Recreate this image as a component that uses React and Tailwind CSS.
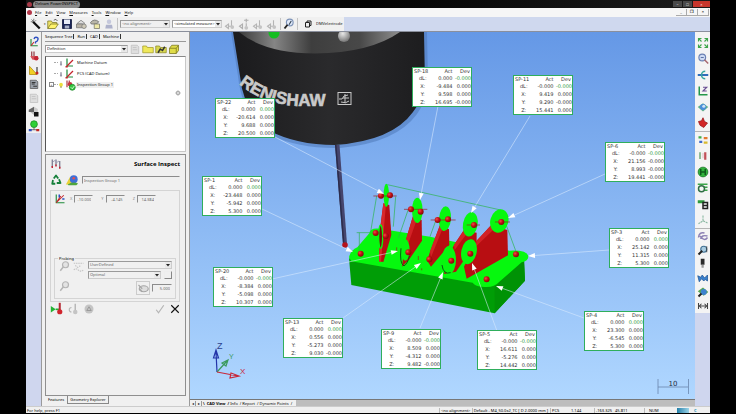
import clsx from "clsx";

const callouts = [
  { id: "SP-22", pos: "left-[25px] top-[66px]", dl: ["0.000", "0.000"], rows: [["X:", "-20.614", "0.000"], ["Y:", "9.688", "0.000"], ["Z:", "20.500", "0.000"]] },
  { id: "SP-18", pos: "left-[222px] top-[35px]", dl: ["0.000", "-0.000"], rows: [["X:", "-9.484", "0.000"], ["Y:", "9.598", "0.000"], ["Z:", "16.695", "-0.000"]] },
  { id: "SP-11", pos: "left-[323px] top-[43px]", dl: ["-0.000", "-0.000"], rows: [["X:", "9.419", "0.000"], ["Y:", "9.290", "-0.000"], ["Z:", "15.441", "0.000"]] },
  { id: "SP-6", pos: "left-[415px] top-[110px]", dl: ["-0.000", "-0.000"], rows: [["X:", "21.156", "-0.000"], ["Y:", "8.993", "-0.000"], ["Z:", "19.441", "-0.000"]] },
  { id: "SP-1", pos: "left-[12px] top-[144px]", dl: ["0.000", "0.000"], rows: [["X:", "-23.448", "0.000"], ["Y:", "-5.942", "0.000"], ["Z:", "5.300", "0.000"]] },
  { id: "SP-3", pos: "left-[419px] top-[196px]", dl: ["0.000", "0.000"], rows: [["X:", "25.142", "0.000"], ["Y:", "11.315", "0.000"], ["Z:", "5.300", "0.000"]] },
  { id: "SP-20", pos: "left-[23px] top-[235px]", dl: ["-0.000", "-0.000"], rows: [["X:", "-8.384", "0.000"], ["Y:", "-5.098", "0.000"], ["Z:", "10.307", "0.000"]] },
  { id: "SP-13", pos: "left-[93px] top-[286px]", dl: ["0.000", "0.000"], rows: [["X:", "0.556", "0.000"], ["Y:", "-5.273", "0.000"], ["Z:", "9.030", "-0.000"]] },
  { id: "SP-9", pos: "left-[191px] top-[297px]", dl: ["-0.000", "-0.000"], rows: [["X:", "8.509", "0.000"], ["Y:", "-4.312", "0.000"], ["Z:", "9.482", "-0.000"]] },
  { id: "SP-5", pos: "left-[287px] top-[298px]", dl: ["-0.000", "-0.000"], rows: [["X:", "16.611", "0.000"], ["Y:", "-5.276", "0.000"], ["Z:", "14.442", "0.000"]] },
  { id: "SP-4", pos: "left-[394px] top-[279px]", dl: ["0.000", "0.000"], rows: [["X:", "23.300", "0.000"], ["Y:", "-6.545", "0.000"], ["Z:", "5.300", "0.000"]] },
];

// x1, y1 = callout end, x2, y2 = arrow tip
const leaders = [
  [275, 137, 384, 194],
  [262, 209, 353, 252],
  [438, 106, 420, 200],
  [530, 116, 471, 213],
  [605, 174, 508, 218],
  [609, 250, 528, 256],
  [584, 318, 496, 286],
  [497, 331, 472, 263],
  [420, 328, 443, 272],
  [343, 318, 421, 263],
  [272, 279, 398, 251],
];

const balls = [
  [153, 77], [180, 76], [137, 189], [92, 251], [167, 198], [243, 118], [272, 125], [323, 150], [354, 148],
  [432, 165], [514, 156], [558, 253], [470, 328], [421, 251], [364, 272], [298, 268], [235, 247],
];

const Icon = ({ children, className = "size-3" }) => (
  <svg viewBox="0 0 16 16" className={clsx("shrink-0", className)} fill="none" aria-hidden="true">
    {children}
  </svg>
);

const ToolButton = ({ label, children, className, disabled }) => (
  <button type="button" aria-label={label} disabled={disabled} className={clsx("flex items-center justify-center shrink-0", className)}>
    {children}
  </button>
);

const icons = {
  wand: <Icon><path d="M4 5l9 9" stroke="#111" strokeWidth="3" /><path d="M2 2l3 3M5 1v3M1 5h3M8 3L6 5" stroke="#555" strokeWidth="1" /></Icon>,
  open: <Icon><path d="M1 14V4h5l1 2h6v3" fill="#efe36a" stroke="#7a7420" /><path d="M1 14l4-6h10l-4 6z" fill="#fff36b" stroke="#7a7420" /><path d="M9 3q3-3 5 1" stroke="#333" /></Icon>,
  save: <Icon><path d="M2 2h12v12H2z" fill="#1b2556" stroke="#0b1238" /><path d="M4 2h8v6H4z" fill="#e8ecf8" /><path d="M5 10h6v4H5z" fill="#aab2c8" /></Icon>,
  print: <Icon><path d="M3 7l5-4 5 4-2 1H4z" fill="#ddd" stroke="#777" /><path d="M2 8h8v5H2z" fill="#b9b2a6" stroke="#777" /><circle cx="12" cy="11" r="3" fill="#cfcab8" stroke="#777" /></Icon>,
  cut: <Icon><path d="M2 6q5-6 11-1l-3 3H3z" fill="#b9b6a8" stroke="#666" /><path d="M7 8h7v6H7z" fill="#efe9a8" stroke="#776" /></Icon>,
  user: <Icon><circle cx="8" cy="5" r="3" fill="#c5c8dc" /><path d="M4 9h8l1 5H3z" fill="#aeb2cb" /></Icon>,
  probeGray: <Icon><path d="M2 11l4-3v6zM6 11h4M10 3v8" stroke="#b5b5b5" strokeWidth="1.5" /><circle cx="11" cy="12" r="2.5" fill="#c4c4c4" /></Icon>,
  probePlus: <Icon><path d="M2 11l4-3v6zM11 1v5M8 3h6M11 7v4" stroke="#b0b0b0" strokeWidth="1.5" /><circle cx="11" cy="13" r="2.5" fill="#c4c4c4" /></Icon>,
  zoomProbe: <Icon><circle cx="9" cy="6" r="4.5" fill="#dfe8f8" stroke="#7d93b8" strokeWidth="1.5" /><path d="M6 9l-4 5" stroke="#222" strokeWidth="2.5" /><path d="M8 9l3-5" stroke="#345" strokeWidth="1.5" /></Icon>,
  box: <Icon className="size-2"><path d="M3 5h8v9H3zM6 5V2h8v9h-3" stroke="#222" strokeWidth="2" /></Icon>,
  axes: <Icon><path d="M4 2v10h8" stroke="#1f8a3b" strokeWidth="1.6" /><path d="M4 12l8-8" stroke="#c3242b" strokeWidth="1.6" /><path d="M2 12h3v2H2z" fill="#c3242b" /></Icon>,
  axesQ: <Icon><path d="M4 4v9h9" stroke="#1f8a3b" strokeWidth="1.5" /><path d="M4 13l4-5" stroke="#c3242b" strokeWidth="1.5" /><path d="M8 4q1-3 4-2t0 5l-2 1v2" stroke="#2b4fc0" strokeWidth="1.8" /></Icon>,
  probeRed: <Icon><path d="M5 2v8M8 2v9" stroke="#8b2d38" strokeWidth="1.5" /><path d="M3 8h10v5H6z" fill="#d6525a" /><circle cx="11" cy="11" r="3" fill="#c22535" /></Icon>,
  yellow: <Icon><path d="M2 3v11h10z" fill="#f0cf25" stroke="#b08a08" /><path d="M12 4v7" stroke="#333" strokeWidth="1.5" /><circle cx="12" cy="12" r="2" fill="#c22525" /></Icon>,
  doc: <Icon><path d="M3 3h8l2 2v9H3z" fill="#9aa0a8" stroke="#555" /><path d="M5 6h5M5 8h4M7 11h5" stroke="#333" strokeWidth="1.3" /></Icon>,
  docLight: <Icon><path d="M3 3h8l2 2v9H3z" fill="#dedede" stroke="#bdbdbd" /><path d="M5 6h5M5 9h6" stroke="#bdbdbd" /></Icon>,
  checker: <Icon><path d="M1 5l7-4v7H1z" fill="#666" /><path d="M8 8h6v6H8z" fill="#111" /><path d="M8 1l5 3v4H8z" fill="#ccc" /><path d="M3 8h5v4z" fill="#bbb" /></Icon>,
  greenBall: <Icon><circle cx="8" cy="5.5" r="4.5" fill="#2ed036" stroke="#188e22" /><path d="M8 10v3M3 13h10" stroke="#444" /><path d="M1 12h4v3H1z" fill="#2f4fc2" /><path d="M11 12h4v3h-4z" fill="#c22525" /></Icon>,
  folder: <Icon><path d="M1 13V4h5l1 2h8v7z" fill="#efe85a" stroke="#a39b28" /></Icon>,
  folderDark: <Icon><path d="M1 13V4h5l1 2h8v7z" fill="#d8d84e" stroke="#8e8828" /><path d="M4 13l3-5 3 2 3-5" stroke="#333" strokeWidth="2" /></Icon>,
  cube: <Icon><path d="M2 7l3-4h9v7l-3 4H2z" fill="#dfdc48" stroke="#77731c" /><path d="M2 7h9v7M11 7l3-4" stroke="#77731c" /></Icon>,
  bulb: <Icon className="size-1.5"><path d="M8 3v8" stroke="#778" strokeWidth="3" /><circle cx="8" cy="12" r="3" fill="#99a" /></Icon>,
  bulbOn: <Icon className="size-1.5"><circle cx="8" cy="7" r="5" fill="#ecdf3c" /><path d="M8 11v4" stroke="#887a20" strokeWidth="3" /></Icon>,
  group: <Icon><path d="M4 2v9M7 2v6" stroke="#aa2a35" strokeWidth="1.5" /><circle cx="8" cy="7" r="3" fill="#c63540" /><circle cx="11" cy="11" r="4" fill="#36c640" stroke="#1d8328" /><path d="M9 11l2 2 3-4" stroke="#fff" /></Icon>,
  probes: <Icon><path d="M3 2v10M8 2v8M13 4v9" stroke="#6b6b83" strokeWidth="1.5" /><path d="M2 12h2M7 10h2M12 13h2" stroke="#c22535" strokeWidth="2.5" /><path d="M4 5l3-2M9 6l3-2" stroke="#88a" /></Icon>,
  recycle: <Icon><path d="M5 6l3-4 3 4M12 7l2 5H9M7 13H3l1-5" stroke="#16803a" strokeWidth="2.4" strokeLinejoin="round" /></Icon>,
  surface: <Icon className="size-[14px]"><path d="M1 13l5-9 3 9z" fill="#e9d235" /><circle cx="10" cy="7" r="4.5" fill="#3e6fd8" /><path d="M3 13q6-4 12-1l-2 2H4z" fill="#4fa53d" /><circle cx="10" cy="6" r="1.5" fill="#e34f4f" /></Icon>,
  axesDots: <Icon><path d="M3 2v11h11" stroke="#1f8a3b" strokeWidth="1.5" /><path d="M3 13L13 3M3 13l6-9" stroke="#c3242b" strokeWidth="1.4" /><path d="M7 2v4M11 8h3" stroke="#2b4fc0" strokeWidth="2" /></Icon>,
  lens: <Icon><circle cx="10" cy="5" r="4" fill="#e3e3e3" stroke="#b4b4b4" strokeWidth="1.6" /><path d="M7 8l-4 5" stroke="#b4b4b4" strokeWidth="2" /></Icon>,
  wave: <Icon><path d="M1 3h13M1 12q3-3 6 0t7 0M3 6l4 3M9 6v3" stroke="#c2c2c2" strokeWidth="1.4" strokeDasharray="2 1" /></Icon>,
  rings: <Icon><ellipse cx="9" cy="9" rx="6" ry="4" fill="#ddd" stroke="#a5a5a5" strokeWidth="1.5" /><path d="M2 4l5 5M3 9l4 4" stroke="#a5a5a5" strokeWidth="1.5" /></Icon>,
  play: <Icon className="size-[13px]"><path d="M1 5l6 4-6 4z" fill="#23b233" /><path d="M7 9h4" stroke="#23b233" strokeWidth="2" /><path d="M12 1v9" stroke="#b42a35" strokeWidth="2.5" /><circle cx="12" cy="12" r="3.2" fill="#d0232c" /></Icon>,
  loop: <Icon><path d="M6 6a3 3 0 100 6" stroke="#b8b8b8" strokeWidth="1.5" /><path d="M11 1v9" stroke="#b8b8b8" strokeWidth="2" /><circle cx="11" cy="12" r="3" fill="#c4c4c4" /></Icon>,
  disc: <Icon><circle cx="8" cy="8" r="6" fill="#c4c4c4" /><path d="M5 10l3-5 3 5z" stroke="#999" strokeWidth="1.3" /></Icon>,
  check: <Icon><path d="M3 9l3 4 7-10" stroke="#b5b5b5" strokeWidth="1.6" /></Icon>,
  cross: <Icon className="size-2.5"><path d="M2 2l12 12M14 2L2 14" stroke="#111" strokeWidth="1.8" /></Icon>,
};

const viewIcons = {
  fit: <Icon><path d="M2 6V2h4M10 2h4v4M14 10v4h-4M6 14H2v-4M2 2l4 4M14 2l-4 4M14 14l-4-4M2 14l4-4" stroke="#3ca64a" strokeWidth="1.5" /></Icon>,
  zoom: <Icon><circle cx="7" cy="6" r="4.5" fill="#cddaf3" stroke="#6980b4" strokeWidth="1.5" /><path d="M10 9l5 5" stroke="#a76a72" strokeWidth="2" /><path d="M5 6h4" stroke="#35508c" /></Icon>,
  rotate: <Icon><path d="M1 8h14" stroke="#2263b5" strokeWidth="2.5" /><path d="M11 3a5 5 0 100 10" stroke="#37a6a0" strokeWidth="2" /></Icon>,
  axisZ: <Icon><path d="M3 2v11h11" stroke="#23964a" strokeWidth="2" /><path d="M8 3h5L8 8h5" stroke="#6a4f93" strokeWidth="1.5" /></Icon>,
  shade: <Icon><path d="M1 8l7-5 7 5-7 6z" fill="#5cae8c" /><circle cx="8" cy="8" r="4" fill="#4b8edb" /><circle cx="9" cy="7" r="2" fill="#cfe4f5" /></Icon>,
  red: <Icon><path d="M2 6l4-1 2-4 2 5 4 2-5 6-5-3z" fill="#d22626" stroke="#96161a" /></Icon>,
  tiles: <Icon><path d="M2 3h4v3H2z" fill="#3fae4a" /><path d="M9 4h5v3H9z" fill="#e4792f" /><path d="M3 9h4v3H3z" fill="#3c68cc" /><path d="M9 10h5v3H9z" fill="#d8ba2e" /></Icon>,
  bars: <Icon><path d="M4 3v9" stroke="#8bb891" strokeWidth="2.5" /><path d="M11 3v10" stroke="#c25058" strokeWidth="3" /><path d="M8 4v7" stroke="#e3c7c9" strokeWidth="1.5" /></Icon>,
  globe: <Icon><circle cx="8" cy="8" r="6.5" fill="#31b33c" stroke="#146f20" /><path d="M5 4v8M11 4v8M5 8h6" stroke="#0e5a1b" strokeWidth="2" /></Icon>,
  list: <Icon><path d="M1 3h13M9 7h5M10 11h4" stroke="#3ca64a" strokeWidth="2" /><circle cx="6" cy="9" r="4" stroke="#2f6e44" strokeWidth="2" /></Icon>,
  flagB: <Icon><path d="M1 3h9v4H1z" fill="#2f9a3c" /><path d="M8 6h6v8H8zM8 10h6" stroke="#222" strokeWidth="2" /></Icon>,
  tripod: <Icon><path d="M8 2v7l-6 4M8 9l6 3" stroke="#8bb8a2" strokeWidth="1.5" strokeDasharray="3 1" /></Icon>,
  shell: <Icon><path d="M2 10q1-8 8-6M5 12q1-6 9-4M4 8q6 8 10 2" stroke="#8c80b4" strokeWidth="2" /></Icon>,
  lensBlue: <Icon><circle cx="9" cy="7" r="4" fill="#a8cbe0" stroke="#417193" strokeWidth="1.5" /><path d="M7 9l-5 5" stroke="#222" strokeWidth="2.5" /><path d="M13 3v8" stroke="#333" /></Icon>,
  pen: <Icon><path d="M5 1h5v8H5z" fill="#2a2a2a" /><path d="M6 9h3v4H6z" fill="#999" /></Icon>,
  blue: <Icon><path d="M1 5l4 2 2-3 3 4 4-4v8l-3-2-2 2-3-3-3 4z" fill="#3b80cc" stroke="#205795" /></Icon>,
  inspect: <Icon><path d="M1 7l7-5 7 6-6 5z" fill="#55a54f" /><circle cx="9" cy="8" r="4" fill="#3d82cf" /><path d="M6 10l-4 4" stroke="#222" strokeWidth="2.5" /></Icon>,
  dim: <Icon><path d="M2 4v8M14 4v8M2 8h12M6 5l-3 3 3 3M10 5l3 3-3 3" stroke="#444" strokeWidth="1.4" /></Icon>,
};

const Callout = ({ id, pos, dl, rows }) => (
  <table className={clsx("absolute h-10 w-[60px] border border-[#2fae5c] bg-white font-['DejaVu_Sans',sans-serif] text-[5px] leading-[7px] text-[#333] whitespace-nowrap", pos)}>
    <thead>
      <tr>
        <th className="w-5 p-0 pl-px text-left font-normal">{id}</th>
        <th className="w-5 p-0 text-right font-normal">Act</th>
        <th className="p-0 pr-px text-right font-normal">Dev</th>
      </tr>
    </thead>
    <tbody>
      <tr>
        <td className="p-0 text-center">dL:</td>
        <td className="p-0 text-right">{dl[0]}</td>
        <td className="p-0 text-right text-[#2f9a3c]">{dl[1]}</td>
      </tr>
      {rows.map(([axis, act, dev]) => (
        <tr key={axis}>
          <td className="p-0 text-center">{axis}</td>
          <td className="p-0 text-right">{act}</td>
          <td className="p-0 text-right">{dev}</td>
        </tr>
      ))}
    </tbody>
  </table>
);

const Leader = ({ points: [x1, y1, x2, y2] }) => {
  const len = Math.hypot(x2 - x1, y2 - y1);
  const ux = (x2 - x1) / len;
  const uy = (y2 - y1) / len;
  const bx = x2 - ux * 7;
  const by = y2 - uy * 7;
  return (
    <g>
      <line x1={x1} y1={y1} x2={bx} y2={by} stroke="#dcecff" strokeWidth="0.8" opacity="0.7" />
      <polygon fill="#fff" points={`${x2},${y2} ${bx - uy * 2.4},${by + ux * 2.4} ${bx + uy * 2.4},${by - ux * 2.4}`} />
    </g>
  );
};

const Scene = () => (
  <svg viewBox="190 32 505 367" preserveAspectRatio="xMinYMin slice" className="absolute inset-0 size-full" role="img" aria-label="CAD view">
    <defs>
      <linearGradient id="body" x1="0" x2="1" y1="0" y2="0">
        <stop offset="0" stopColor="#1b1b1d" />
        <stop offset="0.5" stopColor="#2a2a2c" />
        <stop offset="1" stopColor="#1d1d1f" />
      </linearGradient>
      <linearGradient id="plate" x1="0" x2="1" y1="0" y2="0">
        <stop offset="0" stopColor="#3c3c3c" />
        <stop offset="0.22" stopColor="#858585" />
        <stop offset="0.45" stopColor="#3e3e3e" />
        <stop offset="0.75" stopColor="#484848" />
        <stop offset="1" stopColor="#8e8e8e" />
      </linearGradient>
      <radialGradient id="ball" cx="0.35" cy="0.35" r="0.7">
        <stop offset="0" stopColor="#f04a4a" />
        <stop offset="0.5" stopColor="#c20f14" />
        <stop offset="1" stopColor="#7d080c" />
      </radialGradient>
      <radialGradient id="led" cx="0.4" cy="0.3" r="0.7">
        <stop offset="0" stopColor="#e8e8e8" />
        <stop offset="1" stopColor="#777" />
      </radialGradient>
      <path id="brand" d="M239 84C254 96 272 105 300 106L345 106" />
    </defs>

    {/* probe head */}
    <path d="M231 32L238 76Q242 116 270 135Q300 149 340 148Q396 143 417 114Q427 100 428 84L427 32Z" fill="#4f79b8" opacity="0.55" />
    <path d="M233 32L240 76Q243 110 268 130Q296 145 335 145Q392 141 413 112Q424 98 425 84L424 32Z" fill="url(#body)" />
    <path d="M239 32Q264 53 315 53.5Q370 53 400 32Z" fill="url(#plate)" />
    <circle cx="274" cy="33" r="5.5" fill="#15bd22" />
    <circle cx="344" cy="36" r="6" fill="url(#led)" />
    <text fill="#c9c9c9" stroke="#c9c9c9" strokeWidth="0.6" fontFamily="Liberation Sans, sans-serif" fontWeight="700" fontSize="17">
      <textPath href="#brand">RENISHAW</textPath>
    </text>
    <g stroke="#c9c9c9" fill="none">
      <rect x="338" y="92.5" width="13" height="12" />
      <path d="M339 99h3q1-4 6-4M341 102q5 2 8-1M345 94v9M343 98h6" />
    </g>

    {/* stylus */}
    <path d="M335 145h4.5L347 244h-4Z" fill="#45456d" />
    <path d="M335 145h1.5L344.5 244h-1.5Z" fill="#2c2c4b" />
    <circle cx="345" cy="245" r="2.8" fill="#b5121a" />

    {/* machined block */}
    <g transform="translate(330 170) scale(0.3333)">
      <path d="M57 265L64 345L494 430L585 332L582 265L500 330Z" fill="#009d06" />
      <path d="M494 350L494 430L585 332L582 268Z" fill="#009205" />
      <path d="M57 262Q62 240 82 232L118 190Q120 172 150 176L300 200L420 225L540 242Q590 240 595 258Q596 272 575 277L508 335Q490 356 455 350Q435 348 428 338L64 274Z" fill="#06f80e" />
      <g stroke="#28b548" strokeWidth="2" fill="none">
        <path d="M172 44L512 120L560 250M140 78L122 185M80 188h60M88 188v60M197 80L190 170M235 118L205 205M318 150L300 200" />
      </g>
      <path d="M160 100L178 105L184 195L160 276L147 274L150 180Z" fill="#b80e12" />
      <path d="M160 100L150 180L147 274L153 276L168 102Z" fill="#d9282b" />
      <path d="M250 135L275 150L276 212L238 268L216 290L226 215Z" fill="#b80e12" />
      <path d="M250 135L226 215L228 240L262 145Z" fill="#d22226" />
      <path d="M330 165L357 178L358 225L303 290L292 272L300 245Z" fill="#b80e12" />
      <path d="M330 165L300 245L303 262L340 170Z" fill="#d22226" />
      <path d="M402 180L440 188L440 215L378 305L342 312L360 250L372 225Z" fill="#b80e12" />
      <path d="M402 180L372 225L374 240L414 186Z" fill="#d22226" />
      <path d="M484 165L532 180L534 256L410 326L402 290L440 212Z" fill="#b80e12" />
      <path d="M484 165L440 212L437 230L498 172Z" fill="#d22226" />
      <g fill="#06f80e">
        <ellipse cx="169" cy="76" rx="8" ry="35" />
        <ellipse cx="262" cy="121" rx="16" ry="38" />
        <ellipse cx="345" cy="146" rx="18" ry="37" transform="rotate(5 345 146)" />
        <ellipse cx="421" cy="163" rx="22" ry="37" transform="rotate(10 421 163)" />
        <ellipse cx="508" cy="153" rx="27" ry="36" transform="rotate(15 508 153)" />
        <ellipse cx="357" cy="270" rx="21" ry="42" />
        <ellipse cx="417" cy="245" rx="23" ry="38" transform="rotate(12 417 245)" />
        <ellipse cx="226" cy="240" rx="13" ry="32" />
      </g>
      <ellipse cx="152" cy="200" rx="6" ry="35" stroke="#06f80e" strokeWidth="4" fill="#7d0a0d" />
      <path d="M213 235Q208 280 222 288Q234 280 238 258M336 285Q340 315 362 308" stroke="#0a5c10" strokeWidth="3" fill="none" />
      <path d="M130 78h70M222 118h70M302 150h75M410 165h40M495 156h45M200 232v14M265 258v12M275 295v6" stroke="#9c1a1a" strokeWidth="2" />
      {balls.map(([cx, cy]) => (
        <circle key={`${cx}-${cy}`} cx={cx} cy={cy} r="9" fill="url(#ball)" />
      ))}
    </g>

    {leaders.map((points) => (
      <Leader key={points.join("-")} points={points} />
    ))}

    {/* axis triad */}
    <g fill="none" strokeWidth="1.2">
      <path d="M217 372L216 352M213.5 358L216 350L218.5 358Z" stroke="#2334a8" />
      <path d="M217 372L227 361M222 363l6-3l-2 6z" stroke="#3b9a5c" />
      <path d="M217 372L238 376M231 373l8 3l-9 2z" stroke="#c8283a" />
    </g>
    <g fontFamily="Liberation Sans, sans-serif" fontSize="9">
      <text x="217" y="349" fill="#2c3f8c">Z</text>
      <text x="229" y="359" fill="#3b9a5c" fontSize="7">Y</text>
      <text x="240" y="374" fill="#c8283a" fontSize="8">X</text>
    </g>

    {/* scale bar */}
    <path d="M658 379v15M688.5 379v15M658 387h30" stroke="#6a86ad" strokeWidth="0.8" />
    <text x="673" y="386" textAnchor="middle" fill="#1d2c44" fontFamily="DejaVu Sans, sans-serif" fontSize="7">10</text>
  </svg>
);

const Select = ({ label, value, className, disabled }) => (
  <div className={clsx("relative h-2 border border-[#9a9a9a] border-r-[#ccc] border-b-[#ccc] bg-white", className)}>
    <select aria-label={label} disabled={disabled} defaultValue={value} className={clsx("absolute inset-0 size-full appearance-none px-px leading-[6px]", disabled ? "bg-[#f0f0f0] text-[#666]" : "bg-white")}>
      <option value={value}>{value}</option>
    </select>
    <svg viewBox="0 0 6 6" className="pointer-events-none absolute right-0 top-0 size-1.5 bg-[#e9e9e9]" aria-hidden="true">
      <path d="M1 2h4L3 4.5z" fill="#222" />
    </svg>
  </div>
);

const fieldClass = "h-2 min-w-0 border border-[#8c8c8c] border-r-transparent border-b-transparent bg-[#f0f0f0] px-px leading-[6px] text-[#666]";

const SequenceTree = () => (
  <div className="mx-[3px] h-24 border border-[#c8c8c8] border-l-[#555] border-t-[#888] bg-white pl-[3px]">
    {[
      { name: "Machine Datum", icon: icons.axes },
      { name: "PCS (CAD Datum)", icon: icons.axes },
      { name: "Inspection Group 1", icon: icons.group, open: true },
    ].map(({ name, icon, open }) => (
      <div key={name} className="flex h-[11px] items-center">
        <span className="flex size-[5px] items-center justify-center text-[#333]">
          {open && <button type="button" aria-label="Expand" className="size-[5px] border border-[#888] text-[4px] leading-[3px]">+</button>}
        </span>
        <span className="w-1 border-t border-dotted border-[#aaa]" />
        {open ? icons.bulbOn : icons.bulb}
        {icon}
        <span className={clsx("px-px leading-[6px]", open && "bg-[#f0f0f0]")}>{name}</span>
      </div>
    ))}
    <div className="flex justify-end pr-1">
      <button type="button" aria-label="Recenter tree">
        <Icon className="size-1.5"><circle cx="8" cy="8" r="5" stroke="#888" strokeWidth="2" /><path d="M1 8h14M8 1v14" stroke="#888" /></Icon>
      </button>
    </div>
  </div>
);

const SurfaceInspect = () => (
  <section className="mx-[3px] mt-0.5 flex flex-1 flex-col border border-[#8f8f8f] pl-1 pr-[5px] pt-px">
    <div className="flex h-4 items-center justify-between">
      {icons.probes}
      <h2 className="font-['Open_Sans',sans-serif] text-[6px] font-bold leading-2 text-black">Surface Inspect</h2>
    </div>
    <div className="flex h-4 items-center gap-[3px]">
      {icons.recycle}
      {icons.surface}
      <input aria-label="Group name" disabled defaultValue="Inspection Group 1" className={clsx(fieldClass, "flex-1")} />
    </div>
    <div className="mt-0.5 h-28 border border-[#d4d4d4] px-[3px] pt-0.5">
      <div className="flex items-center gap-1">
        {icons.axesDots}
        {[["X", "-10.000"], ["Y", "-4.145"], ["Z", "14.384"]].map(([axis, value]) => (
          <div key={axis} className="mr-1 flex items-center gap-0.5">
            <label htmlFor={`pos-${axis}`} className="text-[#888]">{axis}</label>
            <input id={`pos-${axis}`} disabled defaultValue={value} className={clsx(fieldClass, "w-[19px] text-right")} />
          </div>
        ))}
      </div>
      <fieldset className="mt-[51px] h-[43px] border border-[#d4d4d4] px-[3px]">
        <legend className="px-px leading-[5px] text-black">Probing</legend>
        <div className="flex gap-[3px]">
          <div className="flex flex-col gap-1">
            {icons.lens}
            <span className="pt-1">{icons.lens}</span>
          </div>
          {icons.wave}
          <div className="flex flex-1 flex-col gap-0.5">
            <Select label="Probing mode" value="UserDefined" disabled />
            <div className="flex gap-[3px]">
              <Select label="Probing path" value="Optimal" disabled className="flex-1" />
              <button type="button" disabled aria-label="More" className="size-2 border border-[#eee] border-b-[#888] border-r-[#888]" />
            </div>
            <div className="flex items-center justify-end gap-0.5">
              <span className="border border-[#ccc]">{icons.rings}</span>
              <input aria-label="Distance" disabled defaultValue="5.000" className={clsx(fieldClass, "w-5 text-right")} />
            </div>
          </div>
        </div>
      </fieldset>
    </div>
    <div className="flex h-[13px] items-center gap-1">
      <ToolButton label="Measure">{icons.play}</ToolButton>
      <ToolButton label="Repeat" disabled>{icons.loop}</ToolButton>
      <ToolButton label="Target" disabled>{icons.disc}</ToolButton>
      <ToolButton label="Apply" disabled className="ml-auto">{icons.check}</ToolButton>
      <ToolButton label="Close">{icons.cross}</ToolButton>
    </div>
  </section>
);

const Divider = () => <span className="h-3 w-px shrink-0 bg-[#c4c4c4]" />;

const App = () => (
  <div className="h-screen overflow-hidden bg-black px-[26px] pb-px font-['Noto_Sans',sans-serif] text-[4px] leading-[6px] text-[#111]">
    <div className="flex h-full flex-col bg-[#f0f0f0]">
      <header className="flex h-2 items-center bg-gradient-to-r from-[#161616] via-[#050505] to-[#1c1c1c]">
        <span className="ml-px size-[5px] rounded-full bg-[#a83a48]" />
        <h1 className="ml-px h-[7px] rounded-sm bg-[#8a8a8a] px-0.5 text-black">Delcam PowerINSPECT</h1>
        <div className="ml-auto flex h-[6px] gap-px text-white">
          <button type="button" aria-label="Minimize" className="w-[9px] bg-[#4a4a4a] leading-[4px]">–</button>
          <button type="button" aria-label="Restore" className="w-[9px] bg-[#4a4a4a] leading-[5px]">□</button>
          <button type="button" aria-label="Close window" className="w-[17px] bg-[#c8362c] leading-[5px]">×</button>
        </div>
      </header>

      <nav className="flex h-[9px] items-center bg-[#f6f6f6] pl-px">
        <span className="size-[5px] rounded-full bg-[#b5384a]" />
        {["File", "Edit", "View", "Measures", "Tools", "Window", "Help"].map((item) => (
          <button key={item} type="button" className="ml-[3px] pr-px first-letter:underline">{item}</button>
        ))}
        <div className="ml-auto flex pr-px">
          {["_", "❐", "×"].map((symbol) => (
            <button key={symbol} type="button" className="h-[7px] w-[11px] border-r border-b border-[#aaa] font-bold leading-[6px]">{symbol}</button>
          ))}
        </div>
      </nav>

      <div className="flex h-[15px] items-center border-b border-[#8a8f9c] bg-[#cfd8ee]">
        <div className="flex h-full items-center gap-0.5 bg-[#f0f0f0] pl-1 pr-0.5">
          <ToolButton label="Wizard">{icons.wand}</ToolButton>
          <span className="w-px text-[3px]">▾</span>
          <ToolButton label="Open">{icons.open}</ToolButton>
          <ToolButton label="Save">{icons.save}</ToolButton>
          <ToolButton label="Print">{icons.print}</ToolButton>
          <ToolButton label="Report">{icons.cut}</ToolButton>
          <ToolButton label="User" disabled>{icons.user}</ToolButton>
          <Divider />
          <Select label="Alignment" value="<no alignment>" disabled className="w-[50px]" />
          <Select label="Measure mode" value="<simulated measure>" className="w-[50px]" />
          <ToolButton label="Probe" disabled>{icons.probeGray}</ToolButton>
          <ToolButton label="Add probe" disabled>{icons.probePlus}</ToolButton>
          <ToolButton label="Next probe" disabled>{icons.probeGray}</ToolButton>
          <ToolButton label="Remove probe" disabled>{icons.probeGray}</ToolButton>
          <Divider />
          <ToolButton label="Find probe">{icons.zoomProbe}</ToolButton>
          <Divider />
          <button type="button" className="ml-1 flex items-center gap-1">
            {icons.box}
            DMVelectrode
          </button>
        </div>
      </div>

      <div className="flex min-h-0 flex-1">
        <aside className="flex w-[15px] flex-col bg-[#cfd6ee]">
          <div className="flex flex-col bg-[#f0f0f0] pt-[3px]">
            {["axesQ", "probeRed", "yellow", "doc", "docLight", "checker", "greenBall"].map((name) => (
              <ToolButton key={name} label={name} className="h-[14px]">{icons[name]}</ToolButton>
            ))}
          </div>
        </aside>

        <div className="flex w-[149px] flex-col border-x border-[#9a9a9a] bg-[#f0f0f0]">
          <div className="flex h-[9px] items-center pl-[3px]">
            {["Sequence Tree", "Run", "CAD", "Machine"].map((tab) => (
              <button key={tab} type="button" className="mr-[3px] border-r border-[#333] pr-px leading-[5px] text-black">{tab}</button>
            ))}
          </div>
          <div className="mx-[3px] flex h-[15px] items-center gap-px border-t border-[#999]">
            <Select label="Definition" value="Definition" className="w-[83px]" />
            <ToolButton label="Delete" disabled>{icons.docLight}</ToolButton>
            <ToolButton label="New folder">{icons.folder}</ToolButton>
            <ToolButton label="Folder view">{icons.folderDark}</ToolButton>
            <ToolButton label="Cube">{icons.cube}</ToolButton>
          </div>
          <SequenceTree />
          <SurfaceInspect />
          <div className="mx-[3px] mb-0.5 flex h-2">
            <button type="button" className="px-[3px] text-black">Features</button>
            <button type="button" className="border border-t-0 border-[#888] px-0.5 text-black">Geometry Explorer</button>
          </div>
        </div>

        <main className="flex min-w-0 flex-1 flex-col">
          <div className="relative min-h-0 flex-1 overflow-hidden bg-gradient-to-b from-[#6598e6] to-[#b0d7ff]">
            <Scene />
            {callouts.map((callout) => (
              <Callout key={callout.id} {...callout} />
            ))}
          </div>
          <div className="flex h-[7px] items-center border-t border-[#777] bg-[#bdbdbd]">
            <div className="flex h-full items-center bg-[#f0f0f0] pr-1">
              <button type="button" aria-label="Scroll left" className="w-[6px] border-r border-[#999] leading-[5px]">◂</button>
              <button type="button" aria-label="Scroll right" className="w-[6px] border-r border-[#999] leading-[5px]">▸</button>
              {["CAD View", "Info", "Report", "Dynamic Points"].map((tab, index) => (
                <button key={tab} type="button" className={clsx("flex gap-0.5 pl-px leading-[5px] text-black", index === 0 && "font-bold")}>
                  {index === 0 && <span>\</span>}
                  {tab}
                  <span>/</span>
                </button>
              ))}
            </div>
          </div>
        </main>

        <aside className="flex w-[15px] flex-col bg-[#cfd6ee]">
          <div className="flex flex-col border-b border-[#b5b5b5] bg-[#f4f4f4] pt-[3px]">
            {["fit", "zoom", "rotate", "axisZ", "shade", "red"].map((name) => (
              <ToolButton key={name} label={name} className="h-4">{viewIcons[name]}</ToolButton>
            ))}
          </div>
          <div className="flex flex-col border-b border-[#b5b5b5] bg-[#f4f4f4]">
            {["tiles", "bars", "globe", "list", "flagB", "tripod"].map((name) => (
              <ToolButton key={name} label={name} className="h-4">{viewIcons[name]}</ToolButton>
            ))}
          </div>
          <div className="flex flex-col bg-[#f4f4f4]">
            {["shell", "lensBlue", "pen", "blue", "inspect", "dim"].map((name) => (
              <ToolButton key={name} label={name} className="h-[14px]">{viewIcons[name]}</ToolButton>
            ))}
          </div>
        </aside>
      </div>

      <footer className="flex h-[7px] items-center border-t border-[#ccc] leading-[5px] text-black">
        <span className="pl-px">For help, press F1</span>
        <div className="ml-auto flex gap-px">
          <span className="border-l border-[#bbb] pl-px">&lt;no alignment&gt;</span>
          <span className="border-l border-[#bbb] px-px">Default - M4_50.0x2_TC [ D 2.0000 mm ]</span>
          <span className="w-5 border-l border-[#bbb] pl-px">PCS</span>
          <span className="w-[22px]">1.144</span>
          <span className="w-5 border-l border-[#bbb] pl-px">-163.325</span>
          <span className="w-7">45.811</span>
          <span className="w-8 border-l border-[#bbb] pl-1">NUM</span>
          <span className="h-[5px] w-3 bg-gradient-to-r from-[#1c7fa8] to-[#9ad4e8]" />
          <span className="w-5 pl-1 font-bold text-[#1c90b8]">C</span>
        </div>
      </footer>
    </div>
  </div>
);

export default App;
